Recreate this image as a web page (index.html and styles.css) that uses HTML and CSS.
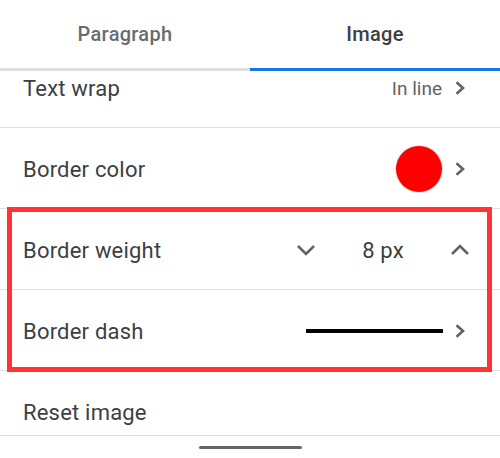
FILE: index.html
```html
<!DOCTYPE html>
<html lang="en">
<head>
  <meta charset="UTF-8" />
  <meta name="viewport" content="width=device-width, initial-scale=1.0"/>
  <title>Image options</title>
  <link rel="stylesheet" href="styles.css">
</head>
<body>
  <div class="sheet">
    <nav class="tabs">
      <a class="tab" href="#paragraph">Paragraph</a>
      <a class="tab active" href="#image">Image</a>
    </nav>

    <div class="list-view">
      <ul class="list">
        <li class="row">
          <span class="label">Text wrap</span>
          <span class="value">In line</span>
          <svg class="chev" width="10" height="14" viewBox="0 0 10 14"><polyline points="1.5,1.2 8,7 1.5,12.8"/></svg>
        </li>
        <li class="row">
          <span class="label">Border color</span>
          <span class="swatch"></span>
          <svg class="chev" width="10" height="14" viewBox="0 0 10 14"><polyline points="1.5,1.2 8,7 1.5,12.8"/></svg>
        </li>
        <li class="group">
          <div class="row">
            <span class="label">Border weight</span>
            <div class="stepper">
              <svg width="20" height="12" viewBox="0 0 20 12"><polyline points="2,2 10,10 18,2"/></svg>
              <span class="num">8 px</span>
              <svg width="20" height="12" viewBox="0 0 20 12"><polyline points="2,10 10,2 18,10"/></svg>
            </div>
          </div>
          <div class="row">
            <span class="label">Border dash</span>
            <span class="dash"></span>
            <svg class="chev" width="10" height="14" viewBox="0 0 10 14"><polyline points="1.5,1.2 8,7 1.5,12.8"/></svg>
          </div>
        </li>
        <li class="row">
          <span class="label">Reset image</span>
        </li>
      </ul>
    </div>

    <footer class="gesture-bar">
      <span class="handle"></span>
    </footer>
  </div>
</body>
</html>
```

FILE: styles.css
```css
body {
  margin: 0;
  font-family: Roboto, "Noto Sans", Arial, sans-serif;
  background: #fff;
  color: #3c4043;
}
.sheet {
  width: 500px;
  height: 458px;
  display: flex;
  flex-direction: column;
  overflow: hidden;
}
.tabs {
  display: flex;
  height: 71px;
  flex-shrink: 0;
}
.tab {
  flex: 1;
  display: flex;
  align-items: center;
  justify-content: center;
  padding-bottom: 1px;
  font-size: 20px;
  font-weight: 500;
  letter-spacing: 0.3px;
  color: #686b70;
  text-decoration: none;
  border-bottom: 3px solid #dcdde0;
}
.tab.active {
  color: #3c4043;
  border-bottom-color: #1a73e8;
}
.list-view {
  flex: 1;
  overflow: hidden;
}
.list {
  list-style: none;
  margin: -24px 0 0;
  padding: 0;
}
.row {
  height: 81px;
  box-sizing: border-box;
  display: flex;
  align-items: center;
  padding: 2px 35px 0 23px;
  border-bottom: 1px solid #e0e0e0;
}
.label {
  flex: 1;
  font-size: 22px;
  letter-spacing: 0.2px;
  color: #3c4043;
}
.value {
  font-size: 19px;
  color: #5f6368;
  margin-right: 13px;
}
.chev,
.stepper svg {
  fill: none;
  stroke: #5f6368;
  stroke-width: 2.6;
}
.swatch {
  width: 46px;
  height: 46px;
  border-radius: 50%;
  background: #ff0000;
  box-shadow: 0 0 0 1px #e3e3e3;
  margin-right: 13px;
}
.group {
  position: relative;
}
.group::after {
  content: "";
  position: absolute;
  top: -2px;
  bottom: -1px;
  left: 7px;
  right: 8px;
  border: 5px solid #ff3333;
}
.stepper {
  display: flex;
  align-items: center;
  margin-right: -5px;
}
.stepper .num {
  width: 134px;
  text-align: center;
  font-size: 22px;
  letter-spacing: 0.2px;
  color: #3c4043;
}
.dash {
  width: 137px;
  height: 4px;
  background: #000;
  margin-right: 12px;
}
.gesture-bar {
  height: 22px;
  flex-shrink: 0;
  border-top: 1px solid #e0e0e0;
  background: #fff;
  display: flex;
  justify-content: center;
  align-items: center;
}
.handle {
  width: 103px;
  height: 3px;
  border-radius: 2px;
  background: #666;
}
```
